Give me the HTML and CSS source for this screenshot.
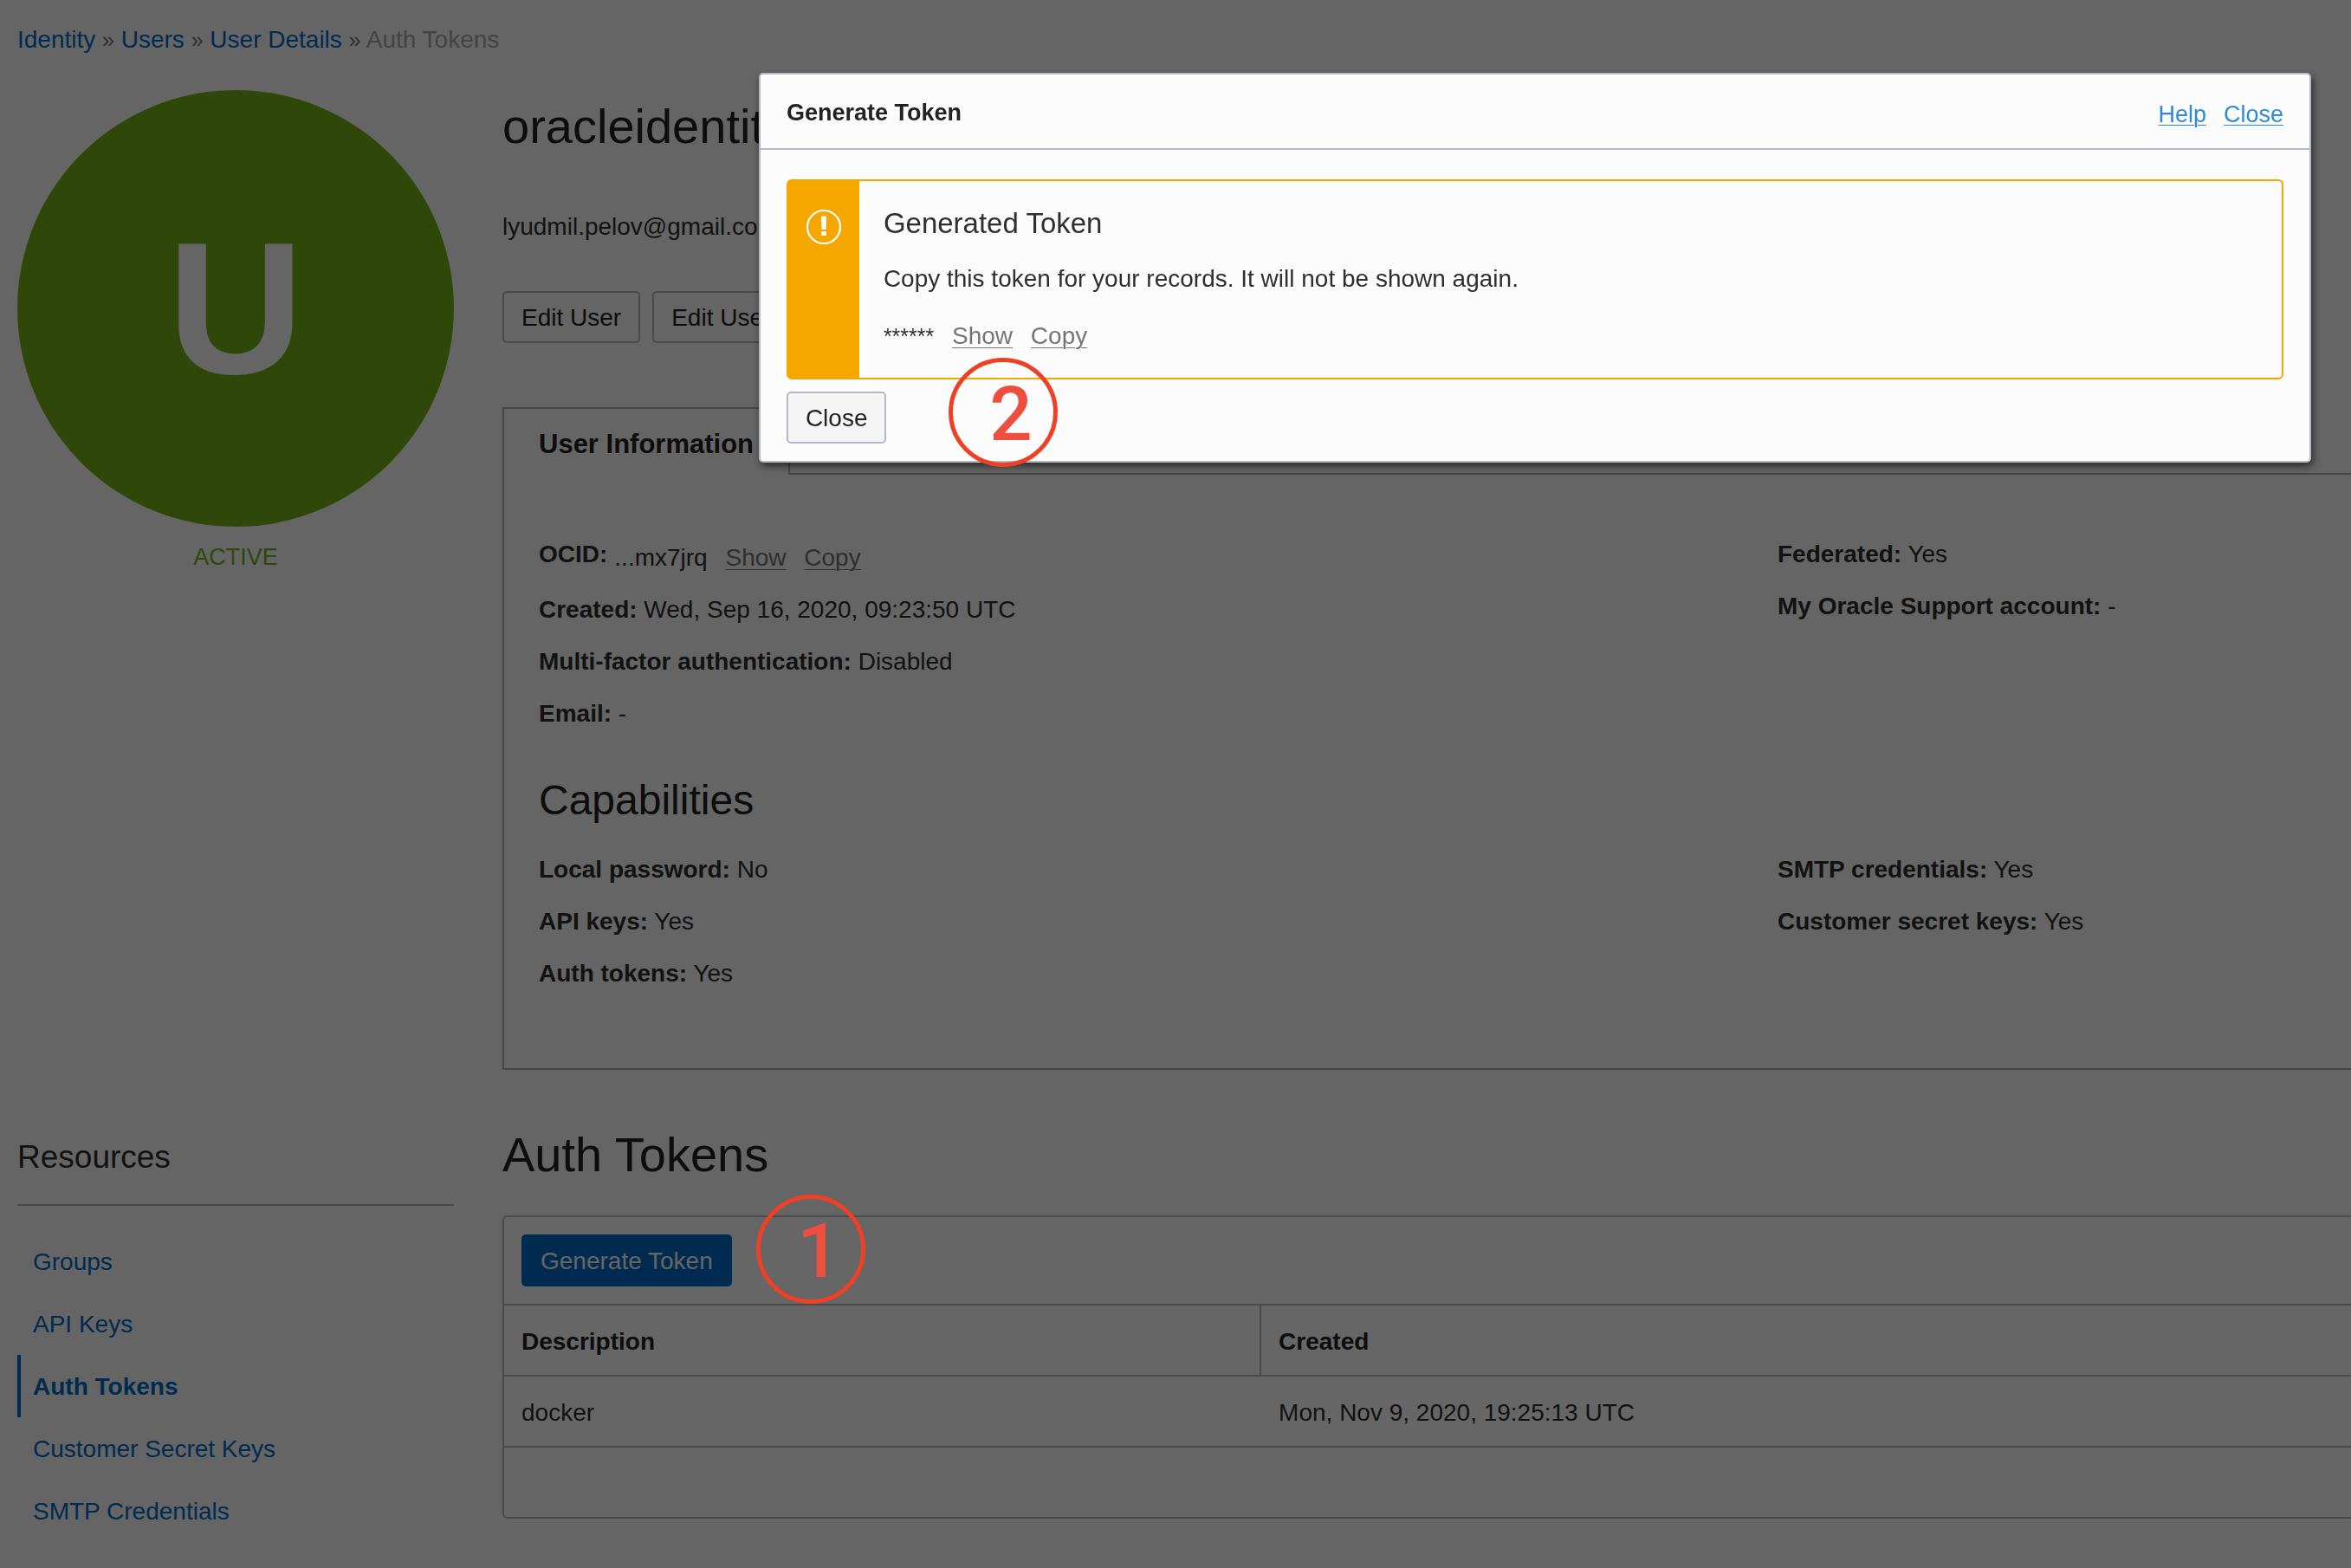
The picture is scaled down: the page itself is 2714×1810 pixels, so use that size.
FILE: index.html
```html
<!DOCTYPE html>
<html lang="en">
<head>
<meta charset="utf-8">
<title>Auth Tokens</title>
<link rel="stylesheet" href="styles.css">
</head>
<body>
<div class="page">
  <nav class="breadcrumb" aria-label="Breadcrumb">
    <a href="#">Identity</a> <span class="sep">»</span> <a href="#">Users</a> <span class="sep">»</span> <a href="#">User Details</a> <span class="sep">»</span> <span class="current">Auth Tokens</span>
  </nav>

  <section class="split">
    <aside class="profile">
      <div class="avatar">U</div>
      <p class="status">ACTIVE</p>
    </aside>
    <main class="details">
      <h1 class="title">oracleidentity</h1>
      <p class="email">lyudmil.pelov@gmail.com</p>
      <div class="actions">
        <button class="btn" type="button">Edit User</button>
        <button class="btn" type="button">Edit User</button>
      </div>
      <div class="tabs">
        <button class="tab" type="button">User Information</button>
        <div class="tab-rest"></div>
      </div>
      <div class="info">
        <div class="info-grid">
          <div>
            <p class="row row-ocid"><b>OCID:</b> <span class="ocid">...mx7jrq <a class="quiet" href="#">Show</a> <a class="quiet" href="#">Copy</a></span></p>
            <p class="row"><b>Created:</b> Wed, Sep 16, 2020, 09:23:50 UTC</p>
            <p class="row"><b>Multi-factor authentication:</b> Disabled</p>
            <p class="row"><b>Email:</b> -</p>
          </div>
          <div>
            <p class="row"><b>Federated:</b> Yes</p>
            <p class="row"><b>My Oracle Support account:</b> -</p>
          </div>
        </div>
        <h3 class="subtitle">Capabilities</h3>
        <div class="info-grid">
          <div>
            <p class="row"><b>Local password:</b> No</p>
            <p class="row"><b>API keys:</b> Yes</p>
            <p class="row"><b>Auth tokens:</b> Yes</p>
          </div>
          <div>
            <p class="row"><b>SMTP credentials:</b> Yes</p>
            <p class="row"><b>Customer secret keys:</b> Yes</p>
          </div>
        </div>
      </div>
    </main>
  </section>

  <section class="split lower">
    <nav class="resources" aria-label="Resources">
      <h2 class="resources-title">Resources</h2>
      <ul class="resource-list">
        <li><a href="#">Groups</a></li>
        <li><a href="#">API Keys</a></li>
        <li><a class="active" href="#">Auth Tokens</a></li>
        <li><a href="#">Customer Secret Keys</a></li>
        <li><a href="#">SMTP Credentials</a></li>
      </ul>
    </nav>
    <div class="tokens">
      <h2 class="title">Auth Tokens</h2>
      <div class="panel">
        <div class="toolbar"><button class="btn btn-primary" type="button">Generate Token</button></div>
        <table class="table">
          <thead><tr><th class="col-desc">Description</th><th>Created</th></tr></thead>
          <tbody><tr><td>docker</td><td>Mon, Nov 9, 2020, 19:25:13 UTC</td></tr></tbody>
        </table>
        <div class="panel-foot"></div>
      </div>
    </div>
  </section>
</div>

<div class="overlay">
  <div class="modal" role="dialog" aria-labelledby="dialog-title">
    <header class="modal-head">
      <h2 class="modal-title" id="dialog-title">Generate Token</h2>
      <div class="modal-links"><a href="#">Help</a><a href="#">Close</a></div>
    </header>
    <div class="modal-body">
      <div class="alert">
        <div class="alert-side">
          <svg width="42" height="42" viewBox="0 0 42 42" aria-hidden="true">
            <circle cx="21" cy="21" r="19" fill="none" stroke="#fff" stroke-width="2.2"/>
            <path d="M18 8.5h6l-.6 15.500h-4.800z" fill="#fff"/>
            <rect x="18.200" y="26" width="5.600" height="5" fill="#fff"/>
          </svg>
        </div>
        <div class="alert-main">
          <h3 class="alert-title">Generated Token</h3>
          <p class="alert-text">Copy this token for your records. It will not be shown again.</p>
          <p class="alert-token"><span class="mask">******</span> <a class="quiet" href="#">Show</a> <a class="quiet" href="#">Copy</a></p>
        </div>
      </div>
      <button class="btn" type="button">Close</button>
    </div>
    <div class="marker marker-two">2</div>
  </div>
</div>
<div class="marker marker-one">1</div>
</body>
</html>
```
FILE: styles.css
```css
* { box-sizing: border-box; }

body {
  margin: 0;
  background: #fcfcfc;
  color: #2f2f2f;
  font: 28px/36px "Liberation Sans", Arial, sans-serif;
}

h1, h2, h3, p, ul { margin: 0; padding: 0; font-weight: 400; }
a { color: #006cc8; text-decoration: none; }
b { font-weight: 700; }

.page { min-height: 100vh; padding: 26px 0 0 20px; overflow: hidden; }

.breadcrumb { line-height: 40px; margin-bottom: 38px; }
.sep { color: #757575; font-size: 25px; }
.current { color: #a8a8a8; }

.split { display: grid; grid-template-columns: 504px 1fr; gap: 56px; }
.lower { margin-top: 66px; }

.avatar {
  display: flex;
  align-items: center;
  justify-content: center;
  height: 504px;
  border-radius: 50%;
  background: #76b419;
  color: #fcfcfc;
  font-size: 218px;
  line-height: 240px;
  font-weight: 700;
}
.status { margin-top: 17px; text-align: center; color: #76b419; font-size: 27px; }

.details { padding-top: 10px; }
.title { color: #222; font-size: 56px; line-height: 64px; }
.email { margin-top: 66px; }
.actions { display: flex; gap: 14px; margin-top: 56px; }

.btn {
  height: 60px;
  padding: 2px 20px 0;
  border: 2px solid #b4b9c4;
  border-radius: 5px;
  background: #f5f5f5;
  color: #222;
  font: inherit;
}
.actions .btn { background: #fcfcfc; }
.btn-primary { border-color: #006cc8; background: #006cc8; color: #fcfcfc; }

.tabs { display: flex; margin-top: 74px; }
.tab {
  height: 78px;
  padding: 6px 40px 0;
  border: 2px solid #aeaeae;
  border-bottom: 0;
  background: none;
  color: #222;
  font: 700 31px/36px "Liberation Sans", Arial, sans-serif;
}
.tab-rest { flex: 1; border-bottom: 2px solid #aeaeae; }

.info {
  padding: 62px 0 79px 40px;
  border-left: 2px solid #aeaeae;
  border-bottom: 2px solid #aeaeae;
}
.info-grid { display: grid; grid-template-columns: 1430fr 662fr; }
.row { line-height: 60px; }
.row-ocid { display: flex; gap: 8px; }
.ocid { padding-top: 4px; }
.quiet {
  margin-left: 13px;
  color: #757575;
  text-decoration: underline;
  text-decoration-thickness: 1px;
  text-underline-offset: 4px;
}
.subtitle { margin: 40px 0 20px; color: #222; font-size: 48px; line-height: 60px; }

.resources { padding-top: 11px; }
.resources-title {
  padding-bottom: 30px;
  border-bottom: 2px solid #b4b9c4;
  font-size: 37px;
  line-height: 48px;
}
.resource-list { margin-top: 28px; list-style: none; }
.resource-list a {
  display: block;
  padding: 2px 0 0 14px;
  border-left: 4px solid transparent;
  line-height: 70px;
}
.resource-list .active { border-color: #006cc8; font-weight: 700; }

.panel {
  margin-top: 38px;
  border: 2px solid #b4b9c4;
  border-right: 0;
  border-radius: 6px 0 0 6px;
  background: #fff;
}
.toolbar { padding: 20px; border-bottom: 2px solid #b4b9c4; }
.toolbar .btn { display: block; }
.table { width: 100%; border-spacing: 0; table-layout: fixed; }
.table th, .table td {
  height: 82px;
  padding: 3px 20px 0;
  border-bottom: 2px solid #b4b9c4;
  text-align: left;
}
.table th { color: #222; }
.table .col-desc { width: 41%; border-right: 2px solid #b4b9c4; }
.panel-foot { height: 80px; }

.overlay {
  position: fixed;
  inset: 0;
  display: flex;
  align-items: flex-start;
  justify-content: flex-end;
  padding: 84px 46px 0;
  background: rgba(0, 0, 0, 0.6);
}
.modal {
  position: relative;
  width: 68.35%;
  border: 2px solid #b4b9c4;
  border-radius: 5px;
  background: #fcfcfc;
  box-shadow: 2px 4px 10px rgba(0, 0, 0, 0.6);
}
.modal-head {
  display: flex;
  align-items: center;
  justify-content: space-between;
  height: 87px;
  padding: 2px 30px 0;
  border-bottom: 2px solid #b4b9c4;
}
.modal-title { color: #222; font-size: 27px; font-weight: 700; }
.modal-links { display: flex; gap: 20px; padding-top: 4px; font-size: 27px; }
.modal-links a {
  color: #2e8ad6;
  text-decoration: underline;
  text-decoration-thickness: 1px;
  text-underline-offset: 3px;
}
.modal-body { padding: 34px 30px 20px; }

.alert {
  display: flex;
  margin-bottom: 14px;
  border: 2px solid #f5a700;
  border-radius: 6px;
}
.alert-side { width: 82px; padding: 32px 0 0 20px; background: #f5a700; }
.alert-side svg { display: block; }
.alert-main { padding: 29px 28px 30px; }
.alert-title { font-size: 33px; line-height: 40px; }
.alert-text { margin-top: 26px; }
.alert-token { margin-top: 30px; }
.mask { font-size: 25px; }

.marker {
  position: absolute;
  width: 126px;
  height: 126px;
  padding-left: 18px;
  border: 5px solid #ef4026;
  border-radius: 50%;
  color: #ef4d3d;
  font: 500 87px/120px Roboto, sans-serif;
  text-align: center;
}
.marker-one { top: 1379px; left: 873px; }
.marker-two { top: 327px; left: 217px; }
```
